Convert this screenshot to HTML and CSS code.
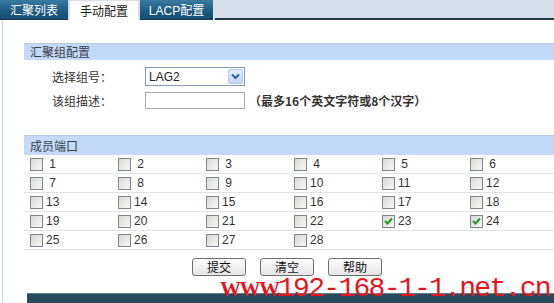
FILE: index.html
```html
<!DOCTYPE html>
<html lang="zh-CN">
<head>
<meta charset="UTF-8">
<title>手动配置</title>
<link rel="stylesheet" href="styles.css">
</head>
<body>

<!-- tab bar -->
<div class="tabs">
  <div class="tab">汇聚列表</div>
  <div class="tab active">手动配置</div>
  <div class="tab">LACP配置</div>
  <div class="tab-fill"></div>
</div>

<div class="page">

  <div class="section">
    <div class="section-title">汇聚组配置</div>
    <div class="form-row first">
      <span class="label">选择组号：</span>
      <div class="select">
        <span class="select-value">LAG2</span>
        <span class="select-btn">
          <svg width="9" height="7" viewBox="0 0 9 7"><path d="M1 1.5 L4.5 5 L8 1.5" fill="none" stroke="#2a5ea8" stroke-width="2"/></svg>
        </span>
      </div>
    </div>
    <div class="form-row">
      <span class="label">该组描述：</span>
      <div class="text-input"></div>
      <span class="hint">（最多16个英文字符或8个汉字）</span>
    </div>
  </div>

  <div class="section">
    <div class="section-title second">成员端口</div>
    <div class="ports">
      <div class="port-row">
        <label class="port"><span class="box"></span><span class="num">&nbsp;1</span></label>
        <label class="port"><span class="box"></span><span class="num">&nbsp;2</span></label>
        <label class="port"><span class="box"></span><span class="num">&nbsp;3</span></label>
        <label class="port"><span class="box"></span><span class="num">&nbsp;4</span></label>
        <label class="port"><span class="box"></span><span class="num">&nbsp;5</span></label>
        <label class="port"><span class="box"></span><span class="num">&nbsp;6</span></label>
      </div>
      <div class="port-row">
        <label class="port"><span class="box"></span><span class="num">&nbsp;7</span></label>
        <label class="port"><span class="box"></span><span class="num">&nbsp;8</span></label>
        <label class="port"><span class="box"></span><span class="num">&nbsp;9</span></label>
        <label class="port"><span class="box"></span><span class="num">10</span></label>
        <label class="port"><span class="box"></span><span class="num">11</span></label>
        <label class="port"><span class="box"></span><span class="num">12</span></label>
      </div>
      <div class="port-row">
        <label class="port"><span class="box"></span><span class="num">13</span></label>
        <label class="port"><span class="box"></span><span class="num">14</span></label>
        <label class="port"><span class="box"></span><span class="num">15</span></label>
        <label class="port"><span class="box"></span><span class="num">16</span></label>
        <label class="port"><span class="box"></span><span class="num">17</span></label>
        <label class="port"><span class="box"></span><span class="num">18</span></label>
      </div>
      <div class="port-row">
        <label class="port"><span class="box"></span><span class="num">19</span></label>
        <label class="port"><span class="box"></span><span class="num">20</span></label>
        <label class="port"><span class="box"></span><span class="num">21</span></label>
        <label class="port"><span class="box"></span><span class="num">22</span></label>
        <label class="port"><span class="box checked"><svg width="9" height="8" viewBox="0 0 9 8"><path d="M1 4 L3.5 6.5 L8 1.5" fill="none" stroke="#21a121" stroke-width="2"/></svg></span><span class="num">23</span></label>
        <label class="port"><span class="box checked"><svg width="9" height="8" viewBox="0 0 9 8"><path d="M1 4 L3.5 6.5 L8 1.5" fill="none" stroke="#21a121" stroke-width="2"/></svg></span><span class="num">24</span></label>
      </div>
      <div class="port-row">
        <label class="port"><span class="box"></span><span class="num">25</span></label>
        <label class="port"><span class="box"></span><span class="num">26</span></label>
        <label class="port"><span class="box"></span><span class="num">27</span></label>
        <label class="port"><span class="box"></span><span class="num">28</span></label>
        <span></span>
        <span></span>
      </div>
    </div>

    <div class="buttons">
      <div class="button">提交</div>
      <div class="button">清空</div>
      <div class="button">帮助</div>
    </div>
  </div>

  <div class="footer-bar"></div>

  <!-- site watermark over the bottom of the page -->
  <div class="watermark"><span class="www">WWW.</span><span class="addr">192-168-1-1.net.cn</span></div>
</div>

</body>
</html>
```

FILE: styles.css
```css
html, body {
  margin: 0;
  height: 100%;
  background: #fff;
  font-family: "Liberation Sans", "Noto Sans CJK SC", sans-serif;
  font-size: 12px;
  color: #333;
  overflow: hidden;
}

/* tabs */
.tabs {
  display: flex;
  height: 20px;
  background: #d7dfea;
}

.tab {
  width: 68px;
  height: 19px;
  margin-right: 2px;
  display: flex;
  justify-content: center;
  align-items: center;
  color: #fff;
  font-size: 12px;
  background: linear-gradient(#3a7ba2, #1b5a80 60%, #144d70);
  border-bottom: 1px solid #263845;
}

.tab:nth-child(3) {
  width: 73px;
}

.tab.active {
  background: #fff;
  color: #222;
  height: 18px;
  margin-top: 1px;
  border-bottom: 1px solid #fff;
}

.tab-fill {
  flex: 1;
  border-bottom: 2px solid #2a3b48;
  height: 17px;
  margin-top: 1px;
}

/* page body */
.page {
  display: flow-root;
  position: relative;
  margin-left: 2px;
  border-left: 1px solid #c9d7e6;
  padding-left: 21px;
  height: calc(100% - 20px);
}

.section-title {
  margin-top: 23px;
  height: 16px;
  line-height: 16px;
  padding-left: 6px;
  background: #c4d8f7;
  border-top: 1px solid #b7cbe6;
  font-family: "Noto Sans CJK SC", sans-serif;
  color: #3a4250;
}

.section-title.second {
  height: 19px;
  line-height: 19px;
}

.form-row {
  display: flex;
  align-items: center;
  height: 24px;
}

.form-row.first {
  margin-top: 5px;
  height: 23px;
}

.label {
  width: 93px;
  margin-left: 28px;
  font-family: "Noto Sans CJK SC", sans-serif;
  color: #333;
}

.select {
  width: 98px;
  height: 17px;
  border: 1px solid #7f9db9;
  display: flex;
  align-items: center;
  justify-content: space-between;
  background: #fff;
}

.select-value {
  padding-left: 3px;
  color: #222;
}

.select-btn {
  width: 15px;
  height: 15px;
  margin-right: 1px;
  display: flex;
  justify-content: center;
  align-items: center;
  background: linear-gradient(#e4edfc, #c3d5f6);
  border: 1px solid #b8cbee;
  box-sizing: border-box;
  border-radius: 2px;
}

.text-input {
  width: 98px;
  height: 15px;
  border: 1px solid #a5acb5;
  background: #fff;
}

.hint {
  margin-left: 4px;
  font-family: "Noto Sans CJK SC", sans-serif;
  font-weight: bold;
  color: #333;
}

/* member ports */
.port-row {
  display: grid;
  grid-template-columns: repeat(6, 88px);
  padding-left: 6px;
  height: 18px;
  align-items: center;
  border-bottom: 1px solid #e3e3e3;
}

.port {
  display: flex;
  align-items: center;
  color: #333;
}

.box {
  width: 11px;
  height: 11px;
  border: 1px solid #7c8791;
  background: linear-gradient(135deg, #d9d9d4, #f6f6f3);
  display: flex;
  justify-content: center;
  align-items: center;
}

.num {
  margin-left: 3px;
  font-size: 12px;
}

.buttons {
  display: flex;
  justify-content: center;
  gap: 14px;
  margin-top: 8px;
  padding-right: 4px;
}

.button {
  width: 52px;
  height: 16px;
  line-height: 16px;
  text-align: center;
  border: 1px solid #6e6e6e;
  border-radius: 3px;
  background: linear-gradient(#fdfdfd, #e6e6e6);
  font-family: "Noto Sans CJK SC", sans-serif;
  color: #111;
}

.footer-bar {
  margin-top: 17px;
  margin-left: 3px;
  height: 11px;
  background: #284a5c;
  border-top: 1px solid #5e7f90;
}

.watermark {
  position: absolute;
  left: 217px;
  top: 259px;
  line-height: 20px;
  color: #e8141c;
  white-space: nowrap;
  display: flex;
  align-items: baseline;
}

.www {
  width: 58px;
  font-family: "Liberation Serif", serif;
  font-weight: bold;
  font-size: 21px;
  letter-spacing: -1.5px;
}

.addr {
  font-family: "Liberation Mono", monospace;
  font-size: 28px;
  letter-spacing: -1.7px;
}
```
